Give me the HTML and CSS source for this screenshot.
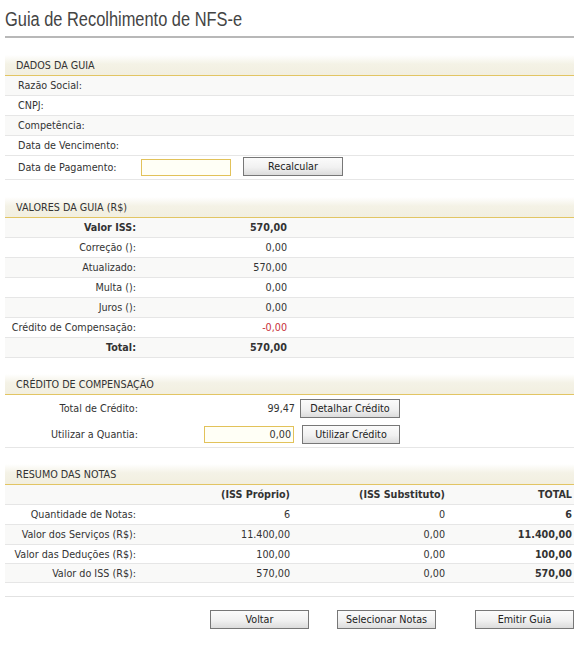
FILE: index.html
```html
<!DOCTYPE html>
<html lang="pt-BR">
<head>
<meta charset="utf-8">
<title>Guia de Recolhimento de NFS-e</title>
<link rel="stylesheet" href="styles.css">
</head>
<body>
<div class="page">
  <h1 class="title"><span class="title-text">Guia de Recolhimento de NFS-e</span></h1>

  <section class="sec">
    <div class="sec-head">DADOS DA GUIA</div>
    <div class="row info"><span class="lbl">Razão Social:</span></div>
    <div class="row info"><span class="lbl">CNPJ:</span></div>
    <div class="row info"><span class="lbl">Competência:</span></div>
    <div class="row info"><span class="lbl">Data de Vencimento:</span></div>
    <div class="row info pay">
      <span class="lbl">Data de Pagamento:</span>
      <input class="field date" type="text">
      <button class="btn recalc" type="button">Recalcular</button>
    </div>
  </section>

  <section class="sec">
    <div class="sec-head">VALORES DA GUIA (R$)</div>
    <div class="row val strong"><span class="k">Valor ISS:</span><span class="v">570,00</span></div>
    <div class="row val"><span class="k">Correção ():</span><span class="v">0,00</span></div>
    <div class="row val"><span class="k">Atualizado:</span><span class="v">570,00</span></div>
    <div class="row val"><span class="k">Multa ():</span><span class="v">0,00</span></div>
    <div class="row val"><span class="k">Juros ():</span><span class="v">0,00</span></div>
    <div class="row val"><span class="k">Crédito de Compensação:</span><span class="v neg">-0,00</span></div>
    <div class="row val strong"><span class="k">Total:</span><span class="v">570,00</span></div>
  </section>

  <section class="sec">
    <div class="sec-head">CRÉDITO DE COMPENSAÇÃO</div>
    <div class="credit">
      <div class="crow">
        <span class="ck">Total de Crédito:</span>
        <span class="cv">99,47</span>
        <button class="btn b-detail" type="button">Detalhar Crédito</button>
      </div>
      <div class="crow">
        <span class="ck">Utilizar a Quantia:</span>
        <span class="cv"><input class="field qty" type="text" value="0,00"></span>
        <button class="btn b-use" type="button">Utilizar Crédito</button>
      </div>
    </div>
  </section>

  <section class="sec">
    <div class="sec-head">RESUMO DAS NOTAS</div>
    <div class="row sum head"><span></span><span>(ISS Próprio)</span><span>(ISS Substituto)</span><span>TOTAL</span></div>
    <div class="row sum"><span>Quantidade de Notas:</span><span>6</span><span>0</span><span class="b">6</span></div>
    <div class="row sum"><span>Valor dos Serviços (R$):</span><span>11.400,00</span><span>0,00</span><span class="b">11.400,00</span></div>
    <div class="row sum short"><span>Valor das Deduções (R$):</span><span>100,00</span><span>0,00</span><span class="b">100,00</span></div>
    <div class="row sum short"><span>Valor do ISS (R$):</span><span>570,00</span><span>0,00</span><span class="b">570,00</span></div>
  </section>

  <div class="actions">
    <button class="btn" type="button">Voltar</button>
    <button class="btn" type="button">Selecionar Notas</button>
    <button class="btn last" type="button">Emitir Guia</button>
  </div>
</div>
</body>
</html>
```

FILE: styles.css
```css
html, body {
  margin: 0;
  padding: 0;
  background: #fff;
  overflow: hidden;
}

body {
  font-family: "DejaVu Sans Condensed", "DejaVu Sans", sans-serif;
  font-stretch: condensed;
  font-size: 10.7px;
  color: #333;
}

.page {
  margin-left: 5px;
  width: 569px;
}

.title {
  margin: 0;
  padding: 7px 0 5px;
  font-family: "Liberation Sans", Arial, sans-serif;
  font-weight: normal;
  font-size: 20px;
  line-height: 24px;
  color: #444;
  border-bottom: 2px solid #b8b8b8;
  white-space: nowrap;
}

.title-text {
  display: inline-block;
  transform: scaleX(0.82);
  transform-origin: left center;
}

.sec {
  margin-top: 17px;
}

.sec + .sec {
  margin-top: 16px;
}

.sec:nth-of-type(2) {
  margin-top: 17px;
}

.sec-head {
  box-sizing: border-box;
  height: 21px;
  padding: 4px 0 0 11px;
  line-height: 14px;
  background: linear-gradient(#ffffff, #f4f2e6 45%, #f2efe0);
  border-bottom: 1px solid #e2c563;
  color: #333;
}

.row {
  box-sizing: border-box;
  height: 20px;
  border-bottom: 1px solid #e6e6e6;
  align-items: center;
}

.row:nth-child(even) {
  background: #f9f9f8;
}

/* DADOS DA GUIA */
.info {
  display: flex;
  padding-left: 13px;
}

.info .lbl {
  width: 123px;
}

.info.pay {
  height: 24px;
  background: #fff;
}

.field {
  box-sizing: border-box;
  height: 17px;
  margin: 0;
  padding: 0 2px;
  border: 1px solid #e2c25a;
  background: #fffff6;
  font: inherit;
  color: #333;
  outline: none;
}

.field.date {
  width: 90px;
  margin-top: -1px;
}

.btn {
  box-sizing: border-box;
  width: 100px;
  height: 19px;
  margin: 0;
  padding: 0;
  border: 1px solid #777;
  border-radius: 0;
  background: linear-gradient(#fbfbfb, #f1f1f1 55%, #dcdcdc);
  font: inherit;
  color: #222;
  line-height: 17px;
  text-align: center;
}

.recalc {
  margin-left: 12px;
  margin-top: -2px;
}

/* VALORES DA GUIA */
.val {
  display: grid;
  grid-template-columns: 131px 151px 1fr;
}

.val .k,
.val .v {
  text-align: right;
}

.val.strong {
  font-weight: bold;
}

.neg {
  color: #c8303a;
}

/* CRÉDITO DE COMPENSAÇÃO */
.credit {
  border-bottom: 1px solid #e6e6e6;
}

.crow {
  display: flex;
  align-items: center;
  height: 26px;
}

.ck {
  width: 133px;
  text-align: right;
}

.cv {
  width: 157px;
  text-align: right;
}

.field.qty {
  width: 90px;
  text-align: right;
  margin-right: 1px;
  vertical-align: middle;
}

.b-detail {
  margin-left: 5px;
}

.b-use {
  width: 98px;
  margin-left: 7px;
}

/* RESUMO DAS NOTAS */
.sum {
  display: grid;
  grid-template-columns: 131px 154px 155px 127px;
}

.sum span {
  text-align: right;
}

.sum .b,
.sum.head span {
  font-weight: bold;
}

.sum.short {
  height: 19px;
}

/* ACTIONS */
.actions {
  margin-top: 13px;
  border-top: 1px solid #e2e2e2;
  padding: 13px 0 0 205px;
  display: flex;
}

.actions .btn + .btn {
  margin-left: 28px;
}

.actions .btn.last {
  margin-left: 39px;
}
```
